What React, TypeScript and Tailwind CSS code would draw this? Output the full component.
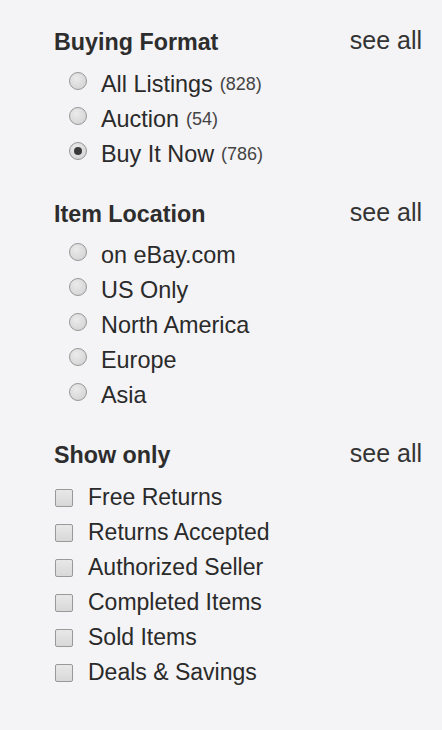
const buyingFormat = [
  { label: "All Listings", count: "(828)", checked: false },
  { label: "Auction", count: "(54)", checked: false },
  { label: "Buy It Now", count: "(786)", checked: true },
];

const locations = ["on eBay.com", "US Only", "North America", "Europe", "Asia"];

const showOnly = [
  "Free Returns",
  "Returns Accepted",
  "Authorized Seller",
  "Completed Items",
  "Sold Items",
  "Deals & Savings",
];

function Radio({ checked }: { checked?: boolean }) {
  return (
    <span className="mt-[5px] ml-[15px] mr-[14px] flex h-[18px] w-[18px] shrink-0 items-center justify-center rounded-full border border-[#979797] bg-[radial-gradient(circle_at_40%_35%,#ebebeb,#cfcfcf)]">
      {checked && <span className="h-[8px] w-[8px] rounded-full bg-[#3a3a3a]" />}
    </span>
  );
}

function Checkbox() {
  return (
    <span className="ml-px mr-[15px] h-[18px] w-[18px] shrink-0 rounded-[2px] border border-[#999] bg-[linear-gradient(#e8e8e8,#d8d8d8)]" />
  );
}

function Heading({ title }: { title: string }) {
  return (
    <div className="flex h-[35px] items-center justify-between leading-[35px]">
      <span className="text-[23.3px] font-bold text-[#2d2d2d]">{title}</span>
      <span className="mb-[4px] text-[25px] text-[#333]">see all</span>
    </div>
  );
}

export default function App() {
  return (
    <div
      className="min-h-[730px] w-[442px] bg-[#f4f3f5] pl-[54px] pr-[20px] pt-[25px] text-[#2a2a2a]"
      style={{ fontFamily: '"Liberation Sans", Arial, sans-serif' }}
    >
      <section>
        <Heading title="Buying Format" />
        <ul className="mt-[7px]">
          {buyingFormat.map((o) => (
            <li key={o.label} className="flex h-[35px] items-start leading-[35px]">
              <Radio checked={o.checked} />
              <span className="text-[23.4px]">{o.label}</span>
              <span className="ml-[7px] text-[18px] text-[#444]">{o.count}</span>
            </li>
          ))}
        </ul>
      </section>

      <section className="mt-[25px]">
        <Heading title="Item Location" />
        <ul className="mt-[6px]">
          {locations.map((l) => (
            <li key={l} className="flex h-[35px] items-start leading-[35px]">
              <Radio />
              <span className="text-[23.4px]">{l}</span>
            </li>
          ))}
        </ul>
      </section>

      <section className="mt-[25px]">
        <Heading title="Show only" />
        <ul className="mt-[7px]">
          {showOnly.map((s) => (
            <li key={s} className="flex h-[35px] items-center leading-[35px]">
              <Checkbox />
              <span className="text-[23px]">{s}</span>
            </li>
          ))}
        </ul>
      </section>
    </div>
  );
}
